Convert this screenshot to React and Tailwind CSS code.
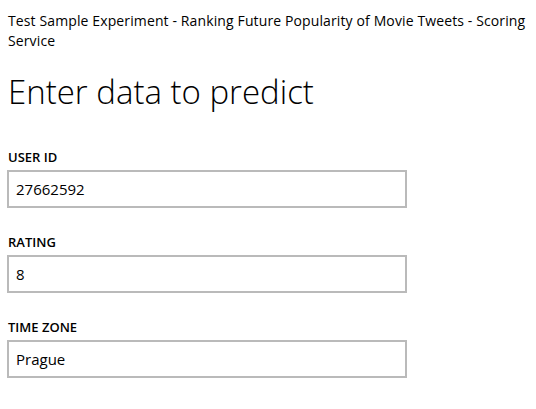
export default function App() {
  const fields = [
    { label: "USER ID", value: "27662592" },
    { label: "RATING", value: "8" },
    { label: "TIME ZONE", value: "Prague" },
  ];
  return (
    <div className="w-[536px] h-[409px] bg-white text-black pl-[8px] pr-[4px] pt-[11px] overflow-hidden" style={{ fontFamily: '"Open Sans", "Noto Sans", sans-serif' }}>
      <p className="text-[14px] leading-[20px] tracking-[0.12px] m-0">
        Test Sample Experiment - Ranking Future Popularity of Movie Tweets - Scoring Service
      </p>
      <h1 className="mt-[21px] text-[33px] leading-[40px] font-light m-0">Enter data to predict</h1>
      <div className="mt-[37px] flex flex-col gap-[26px]">
        {fields.map((f) => (
          <div key={f.label} className="flex flex-col gap-[5px]">
            <label className="text-[13px] leading-[16px] font-semibold">{f.label}</label>
            <div className="ml-[-1px] w-[400px] h-[38px] border-2 border-[#bababa] flex items-center pl-[7px] text-[15px]">
              {f.value}
            </div>
          </div>
        ))}
      </div>
    </div>
  );
}
